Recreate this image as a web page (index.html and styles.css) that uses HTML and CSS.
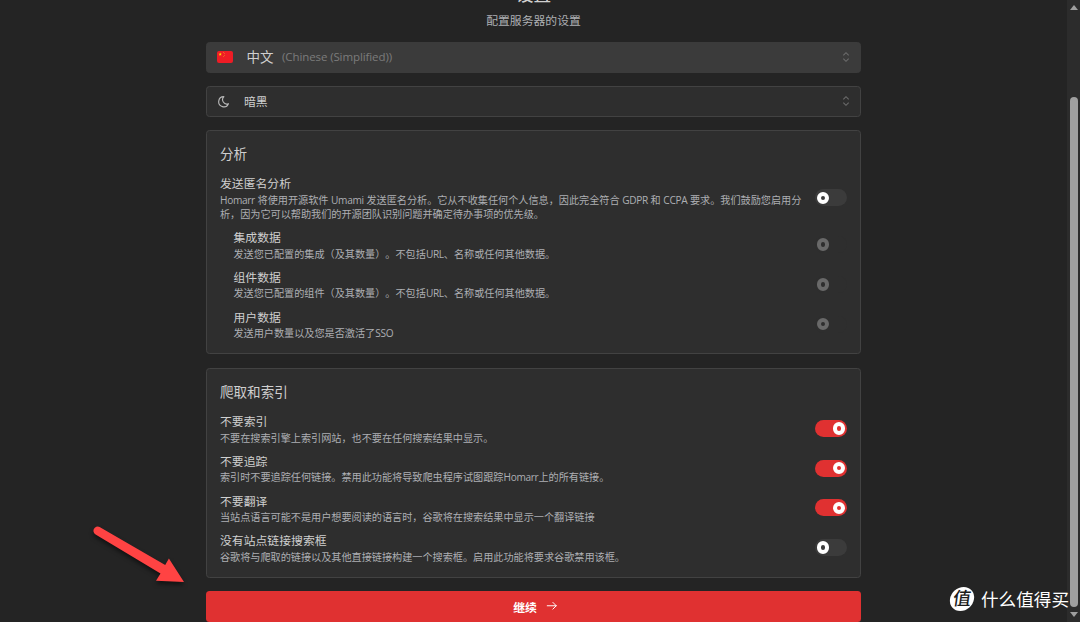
FILE: index.html
```html
<!DOCTYPE html>
<html lang="zh-CN">

<head>
    <meta charset="UTF-8">
    <meta name="viewport" content="width=device-width, initial-scale=1.0">
    <title>Homarr</title>
    <link rel="stylesheet" href="styles.css">
</head>

<body>
    <div class="page">
        <div class="main">
            <div class="header">
                <h1>设置</h1>
                <p>配置服务器的设置</p>
            </div>

            <div class="select select-language">
                <svg class="flag" viewBox="0 0 16 12">
                    <rect width="16" height="12" rx="2" fill="#ee1c25" />
                    <path d="M3.2 1.6l.5 1.2h1.2l-1 .8.4 1.2-1.1-.7-1.1.7.4-1.2-1-.8h1.2z" fill="#ffde00" />
                    <path d="M6 .9h.9v.9H6zM7.2 2.2h.8v.9h-.8zM7.2 4h.8v.8h-.8zM6 5.2h.8v.8H6z" fill="#f08a1c" />
                </svg>
                <span class="language">中文</span>
                <span class="language-en">(Chinese (Simplified))</span>
                <svg class="selector" viewBox="0 0 8 12">
                    <path d="M1.3 4.3L4 1.7l2.7 2.6M1.3 7.7L4 10.3l2.7-2.6" />
                </svg>
            </div>

            <div class="select">
                <svg class="moon" viewBox="0 0 24 24">
                    <path d="M12 3c.132 0 .263 0 .393 0a7.5 7.5 0 0 0 7.92 12.446a9 9 0 1 1 -8.313 -12.454z" />
                </svg>
                <span class="scheme">暗黑</span>
                <svg class="selector" viewBox="0 0 8 12">
                    <path d="M1.3 4.3L4 1.7l2.7 2.6M1.3 7.7L4 10.3l2.7-2.6" />
                </svg>
            </div>

            <div class="card">
                <h2>分析</h2>
                <div class="row">
                    <div class="row-text">
                        <h3>发送匿名分析</h3>
                        <p><span class="latin">Homarr</span> 将使用开源软件 <span class="latin">Umami</span> 发送匿名分析。它从不收集任何个人信息，因此完全符合 <span class="latin">GDPR</span> 和 <span class="latin">CCPA</span> 要求。我们鼓励您启用分<br>析，因为它可以帮助我们的开源团队识别问题并确定待办事项的优先级。</p>
                    </div>
                    <div class="switch"><span class="thumb"></span></div>
                </div>
                <div class="row row-sub">
                    <div class="row-text">
                        <h3>集成数据</h3>
                        <p>发送您已配置的集成（及其数量）。不包括<span class="latin">URL</span>、名称或任何其他数据。</p>
                    </div>
                    <div class="switch disabled"><span class="thumb"></span></div>
                </div>
                <div class="row row-sub">
                    <div class="row-text">
                        <h3>组件数据</h3>
                        <p>发送您已配置的组件（及其数量）。不包括<span class="latin">URL</span>、名称或任何其他数据。</p>
                    </div>
                    <div class="switch disabled"><span class="thumb"></span></div>
                </div>
                <div class="row row-sub">
                    <div class="row-text">
                        <h3>用户数据</h3>
                        <p>发送用户数量以及您是否激活了<span class="latin">SSO</span></p>
                    </div>
                    <div class="switch disabled"><span class="thumb"></span></div>
                </div>
            </div>

            <div class="card">
                <h2>爬取和索引</h2>
                <div class="row">
                    <div class="row-text">
                        <h3>不要索引</h3>
                        <p>不要在搜索引擎上索引网站，也不要在任何搜索结果中显示。</p>
                    </div>
                    <div class="switch on"><span class="thumb"></span></div>
                </div>
                <div class="row">
                    <div class="row-text">
                        <h3>不要追踪</h3>
                        <p>索引时不要追踪任何链接。禁用此功能将导致爬虫程序试图跟踪<span class="latin">Homarr</span>上的所有链接。</p>
                    </div>
                    <div class="switch on"><span class="thumb"></span></div>
                </div>
                <div class="row">
                    <div class="row-text">
                        <h3>不要翻译</h3>
                        <p>当站点语言可能不是用户想要阅读的语言时，谷歌将在搜索结果中显示一个翻译链接</p>
                    </div>
                    <div class="switch on"><span class="thumb"></span></div>
                </div>
                <div class="row">
                    <div class="row-text">
                        <h3>没有站点链接搜索框</h3>
                        <p>谷歌将与爬取的链接以及其他直接链接构建一个搜索框。启用此功能将要求谷歌禁用该框。</p>
                    </div>
                    <div class="switch"><span class="thumb"></span></div>
                </div>
            </div>

            <button class="btn">
                继续
                <svg viewBox="0 0 24 24">
                    <path d="M4 12h16M14 6l6 6l-6 6" />
                </svg>
            </button>
        </div>
    </div>

    <div class="scrollbar">
        <svg viewBox="0 0 8 5"><path d="M0 5L4 0l4 5z" /></svg>
        <div class="scrollbar-thumb"></div>
        <svg viewBox="0 0 8 5"><path d="M0 0h8L4 5z" /></svg>
    </div>

    <svg class="arrow" viewBox="0 0 120 90">
        <path d="M19.6 16.9L85.2 55L88.9 48.5L104 72L76 70.8L80.5 63.5L16 24.8A4.3 4.3 0 0 1 19.6 16.9z" />
    </svg>

    <div class="watermark">
        <span class="watermark-logo">值</span>
        <span>什么值得买</span>
    </div>
</body>

</html>
```
FILE: styles.css
```css
* {
    margin: 0;
    padding: 0;
    box-sizing: border-box;
}

body {
    display: flex;
    position: relative;
    height: 622px;
    overflow: hidden;
    background-color: #242424;
    color: #cfcfcf;
    font-family: "Open Sans", "Noto Sans CJK SC", sans-serif;
    font-size: 11.85px;
    text-spacing-trim: space-all;
}

.page {
    flex: 1;
}

.main {
    width: 655px;
    margin: -18px auto 0;
    display: flex;
    flex-direction: column;
    gap: 13.5px;
}

.header {
    height: 46.5px;
    text-align: center;
}

.header h1 {
    font-size: 17.6px;
    font-weight: 500;
    line-height: 25px;
    margin-bottom: 3.5px;
}

.header p {
    color: #adafb3;
    line-height: 18px;
}

.select {
    height: 30.5px;
    display: flex;
    align-items: center;
    padding: 0 10px;
    background-color: #2e2e2e;
    border: 1px solid #424242;
    border-radius: 3.5px;
}

.select-language {
    background-color: #3b3b3b;
    border-color: #3b3b3b;
}

.flag {
    width: 16px;
    height: 12px;
    margin-right: 13.5px;
}

.language {
    font-size: 13.5px;
    line-height: 20px;
    margin-right: 8.5px;
    padding-bottom: 1px;
}

.language-en {
    color: #7b7b7b;
    font-size: 11.5px;
    letter-spacing: -0.1px;
    padding-bottom: 1px;
}

.scheme {
    padding-bottom: 2px;
}

.selector {
    width: 8px;
    height: 12px;
    margin-left: auto;
    fill: none;
    stroke: #6b6b6b;
    stroke-width: 1.1;
}

.moon {
    width: 13.5px;
    height: 13.5px;
    margin-right: 13.5px;
    fill: none;
    stroke: #b8b8b8;
    stroke-width: 2;
    stroke-linejoin: round;
}

.card {
    padding: 13.2px 13px 13px;
    background-color: #2e2e2e;
    border: 1px solid #424242;
    border-radius: 3.5px;
}

.card h2 {
    font-size: 13.55px;
    font-weight: 400;
    line-height: 21px;
    margin-bottom: 9.3px;
}

.row {
    display: flex;
    align-items: center;
    justify-content: space-between;
    margin-bottom: 7.2px;
}

.row:last-child {
    margin-bottom: 0;
}

.row-sub {
    padding-left: 13.5px;
}

.row h3 {
    font-size: 11.85px;
    font-weight: 400;
    line-height: 18.3px;
}

.row p {
    color: #adafb3;
    font-size: 10.14px;
    line-height: 14.2px;
    white-space: nowrap;
}

.latin {
    letter-spacing: -0.32px;
}

.switch {
    width: 32px;
    height: 17px;
    display: flex;
    align-items: center;
    padding: 0 2px;
    border-radius: 9px;
    background-color: #3b3b3b;
}

.switch.on {
    justify-content: flex-end;
    background-color: #e03131;
}

.switch.disabled {
    background-color: #2e2e2e;
}

.thumb {
    width: 12.4px;
    height: 12.4px;
    border: 4.1px solid #fff;
    border-radius: 50%;
}

.disabled .thumb {
    border-color: #696969;
}

.btn {
    height: 30.5px;
    display: flex;
    align-items: center;
    justify-content: center;
    gap: 8.5px;
    padding: 0 0 1px 5px;
    border: none;
    border-radius: 3.5px;
    background-color: #e03131;
    color: #fff;
    font-family: inherit;
    font-size: 11.85px;
    font-weight: 700;
}

.btn svg {
    width: 13.5px;
    height: 13.5px;
    fill: none;
    stroke: #fff;
    stroke-width: 1.7;
    stroke-linecap: round;
    stroke-linejoin: round;
}

.scrollbar {
    width: 13px;
    display: flex;
    flex-direction: column;
    align-items: center;
    padding: 4.5px 0 5.5px;
    background-color: #2c2c2c;
}

.scrollbar svg {
    width: 8px;
    height: 5px;
    fill: #9f9f9f;
}

.scrollbar-thumb {
    width: 8px;
    height: 510px;
    margin: 87px 0 auto;
    border-radius: 4px;
    background-color: #9f9f9f;
}

.arrow {
    position: absolute;
    left: 80px;
    top: 510px;
    width: 120px;
    height: 90px;
    fill: #ff4343;
    filter: drop-shadow(0 3px 2px rgba(0, 0, 0, 0.5));
}

.watermark {
    position: absolute;
    left: 950px;
    top: 587px;
    display: flex;
    align-items: center;
    gap: 7px;
    color: #fff;
    font-size: 17.6px;
    line-height: 23px;
    white-space: nowrap;
}

.watermark-logo {
    width: 24px;
    height: 24px;
    border-radius: 50%;
    background-color: #fff;
    color: #1c1c1c;
    font-size: 18px;
    line-height: 23px;
    font-weight: 500;
    text-align: center;
    transform: skewX(-8deg);
}
```
